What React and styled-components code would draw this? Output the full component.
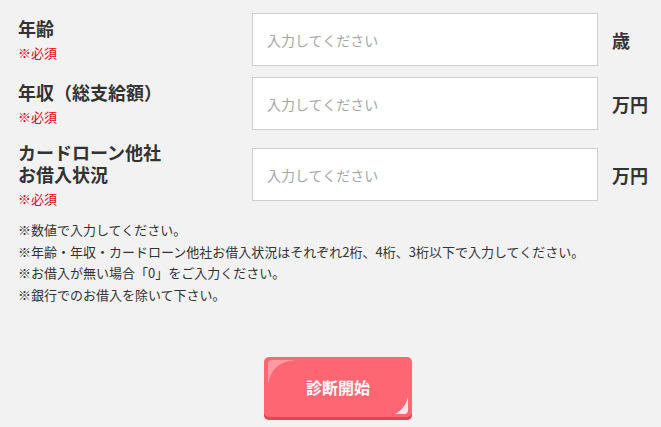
import { createGlobalStyle, styled } from "styled-components";

const GlobalStyle = createGlobalStyle`
  html, body {
    margin: 0;
    padding: 0;
    background: #f2f2f2;
  }
  body {
    font-family: "Noto Sans CJK JP", "Noto Sans", sans-serif;
    color: #333;
  }
`;

const Form = styled.form`
  width: 661px;
  height: 427px;
  box-sizing: border-box;
  padding: 13px 3px 0 18px;
  background: #f2f2f2;
  overflow: hidden;
`;

const Rows = styled.div`
  display: flex;
  flex-direction: column;
  gap: 11px;
`;

const Row = styled.div`
  display: grid;
  grid-template-columns: 234px 346px auto;
  align-items: center;
`;

const Label = styled.div`
  display: flex;
  flex-direction: column;
`;

const LabelTitle = styled.span`
  font-size: 18px;
  font-weight: 700;
  line-height: 22px;
  color: #333;
`;

const Required = styled.span`
  margin-top: 5px;
  font-size: 13px;
  line-height: 18px;
  color: #e60012;
`;

const Input = styled.input`
  box-sizing: border-box;
  width: 346px;
  height: 53px;
  padding: 0 14px;
  border: 1px solid #cfcfcf;
  background: #fff;
  font-family: inherit;
  font-size: 14px;
  color: #333;
  outline: none;

  &::placeholder {
    color: #a6a6a6;
  }
`;

const Unit = styled.span`
  padding-left: 14px;
  font-size: 18px;
  font-weight: 700;
  color: #333;
`;

const Notes = styled.ul`
  list-style: none;
  margin: 11px 0 0;
  padding: 0;
  font-size: 13px;
  line-height: 21.7px;
  color: #333;
`;

const ButtonArea = styled.div`
  display: flex;
  justify-content: center;
  margin-top: 51px;
`;

const SubmitButton = styled.button`
  position: relative;
  width: 148px;
  height: 63px;
  border: none;
  border-radius: 5px;
  background: #ff6674;
  box-shadow: inset 0 -3px 0 #df4656;
  color: #fff;
  font-family: inherit;
  font-size: 16px;
  font-weight: 700;
  padding: 0 0 3px;
  overflow: hidden;

  &::before {
    content: "";
    position: absolute;
    top: 3px;
    left: 4px;
    width: 25px;
    height: 23px;
    border-top-left-radius: 4px;
    background: radial-gradient(circle at 100% 110%, transparent 24px, #ff9aa3 25px);
  }

  &::after {
    content: "";
    position: absolute;
    right: 4px;
    bottom: 6px;
    width: 24px;
    height: 20px;
    border-bottom-right-radius: 4px;
    background: radial-gradient(circle at 0 -10%, transparent 24px, #ffe6e8 25px);
  }
`;

const fields = [
  { title: ["年齢"], unit: "歳" },
  { title: ["年収（総支給額）"], unit: "万円" },
  { title: ["カードローン他社", "お借入状況"], unit: "万円" },
];

const notes = [
  "※数値で入力してください。",
  "※年齢・年収・カードローン他社お借入状況はそれぞれ2桁、4桁、3桁以下で入力してください。",
  "※お借入が無い場合「0」をご入力ください。",
  "※銀行でのお借入を除いて下さい。",
];

export default function App() {
  return (
    <>
      <GlobalStyle />
      <Form onSubmit={(e) => e.preventDefault()}>
        <Rows>
          {fields.map((f, i) => (
            <Row key={i}>
              <Label>
                {f.title.map((t) => (
                  <LabelTitle key={t}>{t}</LabelTitle>
                ))}
                <Required>※必須</Required>
              </Label>
              <Input type="text" placeholder="入力してください" />
              <Unit>{f.unit}</Unit>
            </Row>
          ))}
        </Rows>

        <Notes>
          {notes.map((n) => (
            <li key={n}>{n}</li>
          ))}
        </Notes>

        <ButtonArea>
          <SubmitButton type="submit">診断開始</SubmitButton>
        </ButtonArea>
      </Form>
    </>
  );
}
